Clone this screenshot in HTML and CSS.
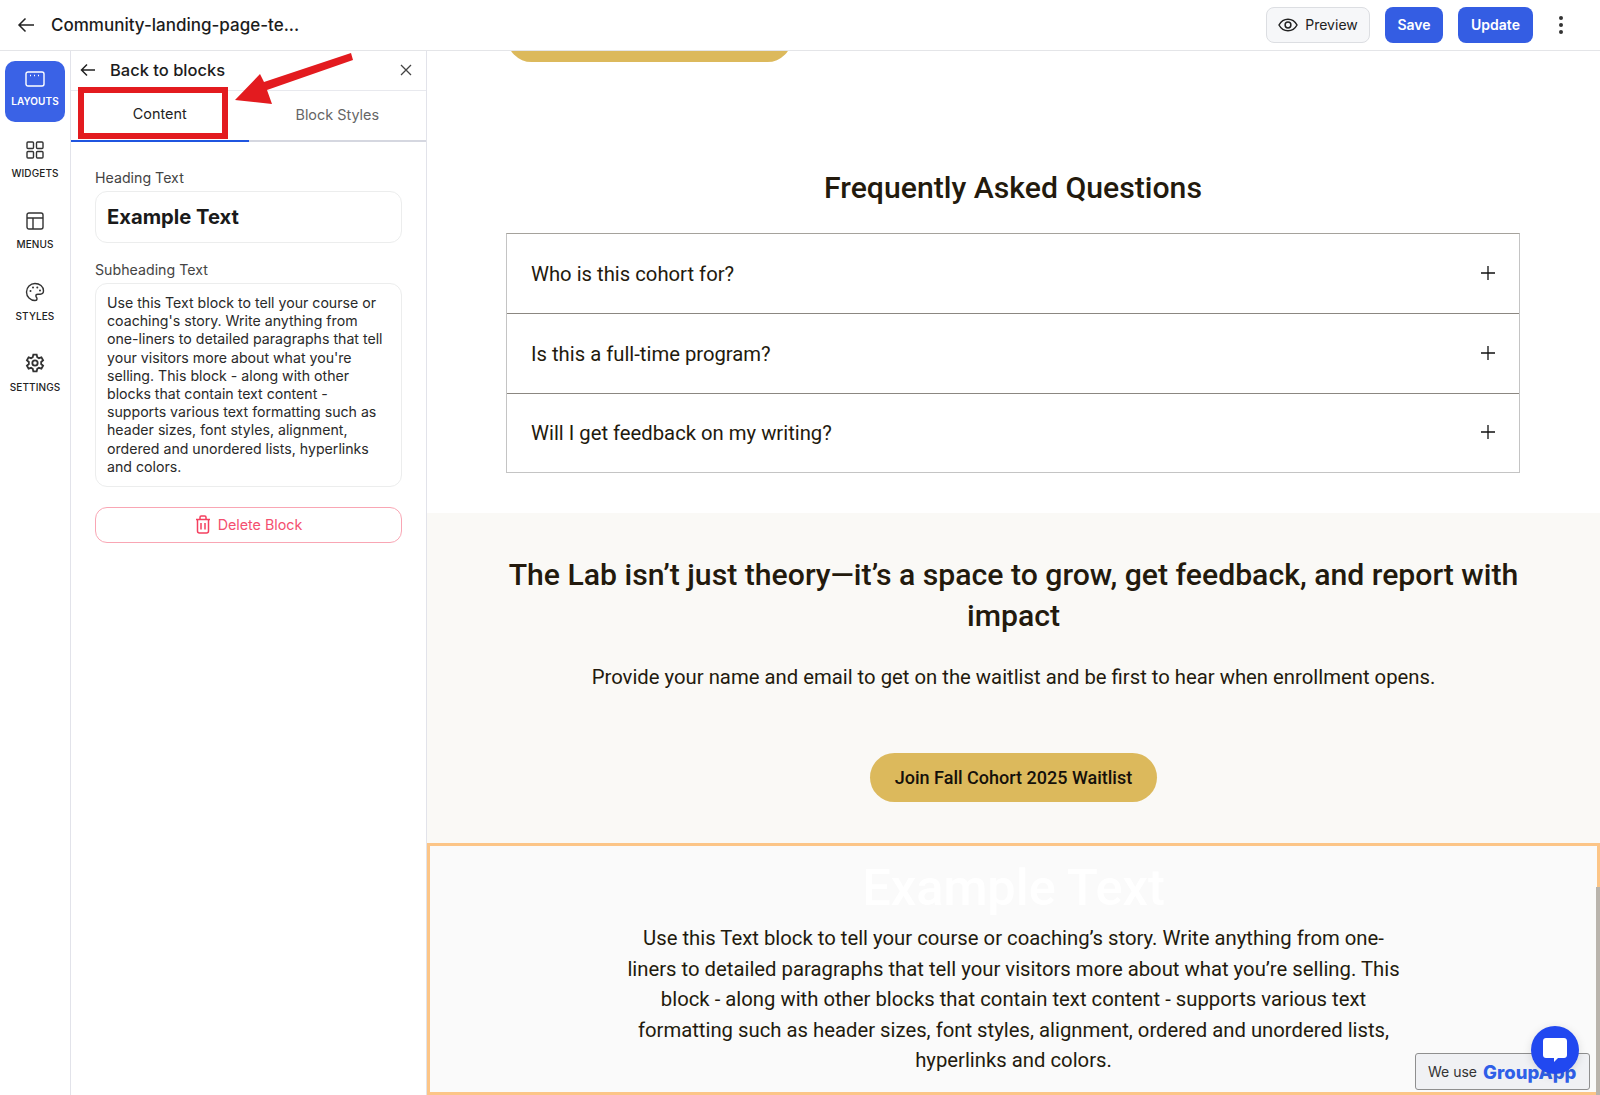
FILE: index.html
```html
<!DOCTYPE html>
<html lang="en">
<head>
    <meta charset="UTF-8">
    <meta name="viewport" content="width=device-width, initial-scale=1.0">
    <title>Community-landing-page-te...</title>
    <link rel="stylesheet" href="styles.css">
</head>
<body>
    <header class="topbar">
        <svg class="back-icon" width="18" height="18" viewBox="0 0 18 18"><path d="M17 9H2M8.500 2.500 2 9l6.500 6.500"/></svg>
        <div class="page-title">Community-landing-page-te...</div>
        <button class="btn-preview">
            <svg width="20" height="14" viewBox="0 0 20 14"><path d="M1 7c2-3.700 5-5.800 9-5.800S17 3.300 19 7c-2 3.700-5 5.800-9 5.800S3 10.700 1 7z"/><circle cx="10" cy="7" r="2.900"/></svg>
            Preview
        </button>
        <button class="btn-blue btn-save">Save</button>
        <button class="btn-blue btn-update">Update</button>
        <div class="more-dots"><span></span><span></span><span></span></div>
    </header>

    <div class="main">
        <nav class="rail">
            <a class="rail-item active">
                <svg width="20" height="16" viewBox="0 0 20 16"><rect x="1" y="1" width="18" height="14" rx="2"/><path class="dots" d="M5 4.500h1M9 4.500h1M13 4.500h1"/></svg>
                <span>Layouts</span>
            </a>
            <a class="rail-item">
                <svg width="18" height="18" viewBox="0 0 18 18"><rect x="1" y="1" width="6.500" height="6.500" rx="1"/><rect x="10.500" y="1" width="6.500" height="6.500" rx="1"/><rect x="1" y="10.500" width="6.500" height="6.500" rx="1"/><rect x="10.500" y="10.500" width="6.500" height="6.500" rx="1"/></svg>
                <span>Widgets</span>
            </a>
            <a class="rail-item">
                <svg width="18" height="18" viewBox="0 0 18 18"><rect x="1" y="1" width="16" height="16" rx="2"/><path d="M1 6h16M7 6v11"/></svg>
                <span>Menus</span>
            </a>
            <a class="rail-item">
                <svg width="20" height="20" viewBox="0 0 20 20"><path d="M10 1.500a8.500 8.500 0 0 0 0 17c1.300 0 2-.8 2-1.800 0-1.300-1.100-1.600-1.100-2.800 0-1 .8-1.700 1.900-1.700h2.400c1.900 0 3.300-1.400 3.300-3.400 0-4.300-3.900-7.300-8.500-7.300z"/><circle class="fill" cx="5.500" cy="9" r="1"/><circle class="fill" cx="8" cy="5.500" r="1"/><circle class="fill" cx="12.300" cy="5.500" r="1"/><circle class="fill" cx="15" cy="8.500" r="1"/></svg>
                <span>Styles</span>
            </a>
            <a class="rail-item">
                <svg class="gear" width="20" height="20" viewBox="0 0 24 24"><circle cx="12" cy="12" r="3.200"/><path d="M10 2h4l.7 3.100 2 1.100 3-1 2 3.500-2.300 2.100v2.400l2.300 2.100-2 3.500-3-1-2 1.100L14 22h-4l-.7-3.100-2-1.100-3 1-2-3.500 2.300-2.100v-2.400L2.300 8.700l2-3.500 3 1 2-1.100z"/></svg>
                <span>Settings</span>
            </a>
        </nav>

        <aside class="panel">
            <div class="panel-head">
                <svg class="back-icon" width="16" height="14" viewBox="0 0 16 14"><path d="M15 7H1.500M7 1.500 1.500 7 7 12.500"/></svg>
                <div class="panel-title">Back to blocks</div>
                <svg class="close-icon" width="12" height="12" viewBox="0 0 12 12"><path d="M1 1l10 10M11 1 1 11"/></svg>
            </div>
            <div class="tabs">
                <div class="tab tab-active">Content</div>
                <div class="tab">Block Styles</div>
            </div>
            <div class="panel-body">
                <label class="field-label">Heading Text</label>
                <div class="input-box">Example Text</div>
                <label class="field-label label-sub">Subheading Text</label>
                <div class="textarea-box">Use this Text block to tell your course or coaching's story. Write anything from one-liners to detailed paragraphs that tell your visitors more about what you're selling. This block - along with other blocks that contain text content - supports various text formatting such as header sizes, font styles, alignment, ordered and unordered lists, hyperlinks and colors.</div>
                <button class="btn-delete">
                    <svg width="16" height="19" viewBox="0 0 16 19"><path d="M1 4.500h14M5 4.500V2.200C5 1.500 5.500 1 6.200 1h3.600c.7 0 1.200.5 1.200 1.200v2.300M2.500 4.500V16c0 1.200.8 2 2 2h7c1.200 0 2-.8 2-2V4.500M6 8v6.500M10 8v6.500"/></svg>
                    Delete Block
                </button>
            </div>
        </aside>

        <main class="canvas">
            <div class="cta-stub"></div>

            <section class="faq">
                <h2 class="faq-title">Frequently Asked Questions</h2>
                <div class="faq-list">
                    <div class="faq-row">
                        <span>Who is this cohort for?</span>
                        <svg width="14" height="14" viewBox="0 0 14 14"><path d="M7 0v14M0 7h14"/></svg>
                    </div>
                    <div class="faq-row">
                        <span>Is this a full-time program?</span>
                        <svg width="14" height="14" viewBox="0 0 14 14"><path d="M7 0v14M0 7h14"/></svg>
                    </div>
                    <div class="faq-row">
                        <span>Will I get feedback on my writing?</span>
                        <svg width="14" height="14" viewBox="0 0 14 14"><path d="M7 0v14M0 7h14"/></svg>
                    </div>
                </div>
            </section>

            <section class="waitlist">
                <h2 class="waitlist-title">The Lab isn’t just theory—it’s a space to grow, get feedback, and report with impact</h2>
                <p class="waitlist-text">Provide your name and email to get on the waitlist and be first to hear when enrollment opens.</p>
                <a class="cta">Join Fall Cohort 2025 Waitlist</a>
            </section>

            <section class="text-block">
                <h2 class="text-block-title">Example Text</h2>
                <p class="text-block-body">Use this Text block to tell your course or coaching’s story. Write anything from one-liners to detailed paragraphs that tell your visitors more about what you’re selling. This block - along with other blocks that contain text content - supports various text formatting such as header sizes, font styles, alignment, ordered and unordered lists, hyperlinks and colors.</p>
            </section>
        </main>
    </div>

    <!-- annotation drawn over the screenshot -->
    <div class="note-box"></div>
    <svg class="note-arrow" width="120" height="56" viewBox="0 0 120 56"><path d="M116 3 118 10 32 40 37 54 0 50 25 24 29 32Z"/></svg>

    <div class="scroll-thumb"></div>
    <div class="brand-badge">We use <b>GroupApp</b></div>
    <div class="chat-bubble">
        <svg width="26" height="26" viewBox="0 0 26 26"><path d="M4 1h18c1.700 0 3 1.300 3 3v14c0 1.700-1.300 3-3 3h-6l-4 4v-4H4c-1.700 0-3-1.300-3-3V4c0-1.700 1.300-3 3-3z"/></svg>
    </div>
</body>
</html>
```

FILE: styles.css
```css
* {
    box-sizing: border-box;
}
body {
    font-family: Inter, "Noto Sans", sans-serif;
    margin: 0;
    height: 1095px;
    overflow: hidden;
    color: #1a1a1a;
    background-color: #fff;
}
button {
    font-family: inherit;
    cursor: pointer;
}

/* top bar */
.topbar {
    height: 51px;
    display: flex;
    align-items: center;
    padding: 0 37px 1px 17px;
    border-bottom: 1px solid #e4e5e8;
}
.back-icon {
    fill: none;
    stroke: #222;
    stroke-width: 1.5;
}
.page-title {
    margin-left: 16px;
    font-size: 17px;
    font-weight: 500;
    color: #1c1c1c;
    flex: 1;
}
.btn-preview {
    height: 36px;
    width: 104px;
    display: flex;
    align-items: center;
    justify-content: center;
    gap: 7px;
    font-size: 14px;
    font-weight: 400;
    color: #222;
    background-color: #f6f7f9;
    border: 1px solid #dcdee2;
    border-radius: 8px;
}
.btn-preview svg {
    fill: none;
    stroke: #222;
    stroke-width: 1.500;
}
.btn-blue {
    height: 36px;
    font-size: 14px;
    font-weight: 600;
    color: #fff;
    background-color: #345de3;
    border: none;
    border-radius: 8px;
}
.btn-save {
    width: 58px;
    margin-left: 15px;
}
.btn-update {
    width: 75px;
    margin-left: 15px;
}
.more-dots {
    margin-left: 26px;
    width: 4px;
    display: flex;
    flex-direction: column;
    gap: 3px;
}
.more-dots span {
    width: 4px;
    height: 4px;
    border-radius: 50%;
    background-color: #333;
}

.main {
    display: flex;
    height: 1044px;
}

/* icon rail */
.rail {
    width: 71px;
    flex: none;
    border-right: 1px solid #e2e3ea;
    padding: 10px 5px 0;
    display: flex;
    flex-direction: column;
    gap: 10px;
}
.rail-item {
    height: 61px;
    display: flex;
    flex-direction: column;
    align-items: center;
    justify-content: center;
    gap: 8px;
    padding-bottom: 5px;
    border-radius: 10px;
    font-size: 10px;
    font-weight: 500;
    letter-spacing: .1px;
    text-transform: uppercase;
    color: #222;
}
.rail-item svg {
    fill: none;
    stroke: #333;
    stroke-width: 1.400;
}
.rail-item .fill {
    fill: #333;
    stroke: none;
}
.rail-item .gear {
    stroke-width: 2.200;
}
.rail-item.active {
    background-color: #3a62e6;
    color: #fff;
    font-weight: 600;
}
.rail-item.active svg {
    stroke: #fff;
}

/* block panel */
.panel {
    width: 356px;
    flex: none;
    border-right: 1px solid #e2e3ea;
}
.panel-head {
    height: 40px;
    display: flex;
    align-items: center;
    padding: 0 14px 1px 9px;
    border-bottom: 1px solid #e8e9ee;
}
.panel-title {
    flex: 1;
    margin-left: 14px;
    font-size: 16.500px;
    font-weight: 500;
    color: #1c1c1c;
}
.close-icon {
    fill: none;
    stroke: #444;
    stroke-width: 1.300;
}
.tabs {
    display: flex;
    height: 51px;
    border-bottom: 2px solid #d5d7e0;
}
.tab {
    width: 178px;
    height: 51px;
    padding-bottom: 4px;
    display: flex;
    align-items: center;
    justify-content: center;
    font-size: 14.400px;
    color: #666;
}
.tab-active {
    color: #222;
    border-bottom: 2px solid #1f55e0;
}
.panel-body {
    padding: 27px 24px 0;
}
.field-label {
    display: block;
    font-size: 14.200px;
    line-height: 17px;
    color: #444;
}
.label-sub {
    margin-top: 18px;
}
.input-box {
    margin-top: 5px;
    height: 52px;
    padding: 0 11px 2px;
    display: flex;
    align-items: center;
    font-size: 20.200px;
    font-weight: 700;
    color: #1a1a1a;
    border: 1px solid #eceded;
    border-radius: 12px;
}
.textarea-box {
    margin-top: 5px;
    height: 204px;
    padding: 10px 11px;
    font-size: 14.150px;
    line-height: 18.200px;
    color: #2a2a2a;
    border: 1px solid #eceded;
    border-radius: 12px;
}
.btn-delete {
    margin-top: 20px;
    width: 100%;
    height: 36px;
    padding-bottom: 2px;
    display: flex;
    align-items: center;
    justify-content: center;
    gap: 7px;
    font-size: 14.300px;
    color: #f4506f;
    background-color: #fff;
    border: 1px solid #f9a6b4;
    border-radius: 12px;
}
.btn-delete svg {
    fill: none;
    stroke: #f4405f;
    stroke-width: 1.500;
}

/* page preview */
.canvas {
    flex: 1;
    overflow: hidden;
    font-family: Roboto, sans-serif;
    color: #231a0d;
}
.cta-stub {
    width: 285px;
    height: 49px;
    margin: -38px 0 0 80px;
    background-color: #dcb95c;
    border-radius: 25px;
}
.faq {
    height: 451px;
    padding: 0 80px 0 79px;
}
.faq-title {
    margin: 0;
    padding-top: 106px;
    height: 171px;
    font-size: 30.200px;
    line-height: 40px;
    font-weight: 500;
    text-align: center;
}
.faq-list {
    border: 1px solid #c4c4c4;
    border-top-color: #a5a29c;
}
.faq-row {
    height: 80px;
    display: flex;
    align-items: center;
    justify-content: space-between;
    padding: 0 24px;
    font-size: 20.250px;
    border-bottom: 1px solid #8b8781;
}
.faq-row:last-child {
    height: 78px;
    border-bottom: none;
}
.faq-row svg {
    fill: none;
    stroke: #111;
    stroke-width: 1.300;
    margin-bottom: 2px;
}
.waitlist {
    height: 330px;
    padding: 41px 70px 0;
    text-align: center;
    background-color: #faf9f6;
}
.waitlist-title {
    margin: 0;
    font-size: 30.200px;
    line-height: 41px;
    font-weight: 500;
}
.waitlist-text {
    margin: 26px 0 0;
    font-size: 20.300px;
    line-height: 30px;
}
.cta {
    display: inline-block;
    margin-top: 61px;
    padding: 0 24.500px;
    height: 49px;
    line-height: 49px;
    font-size: 18px;
    font-weight: 500;
    color: #15100a;
    background-color: #dcb95c;
    border-radius: 25px;
}
.text-block {
    height: 252px;
    padding-top: 12px;
    text-align: center;
    background-color: #fafafa;
    border: 3px solid #fcc587;
}
.text-block-title {
    margin: 0;
    font-size: 50.500px;
    line-height: 60px;
    font-weight: 500;
    color: #fff;
}
.text-block-body {
    width: 785px;
    margin: 5px auto 0;
    font-size: 20.300px;
    line-height: 30.500px;
}

/* overlays */
.note-box {
    position: absolute;
    left: 78px;
    top: 87px;
    width: 150px;
    height: 52px;
    border: 6px solid #e31b1f;
}
.note-arrow {
    position: absolute;
    left: 235px;
    top: 50px;
    fill: #e31b1f;
}
.scroll-thumb {
    position: absolute;
    right: 0;
    top: 887px;
    bottom: 0;
    width: 4px;
    background-color: #b9b4ac;
}
.brand-badge {
    position: absolute;
    left: 1415px;
    top: 1053px;
    width: 175px;
    height: 37px;
    padding-left: 12px;
    display: flex;
    align-items: center;
    gap: 6px;
    font-size: 14px;
    color: #333;
    background-color: #f0f1f4;
    border: 1px solid #8f8f8f;
    border-radius: 3px;
}
.brand-badge b {
    font-size: 18.500px;
    font-weight: 800;
    color: #2f5fe8;
}
.chat-bubble {
    position: absolute;
    left: 1531px;
    top: 1026px;
    width: 48px;
    height: 48px;
    display: flex;
    align-items: center;
    justify-content: center;
    border-radius: 50%;
    background-color: #2148f0;
    box-shadow: 0 2px 10px rgba(0, 0, 0, .12);
}
.chat-bubble svg {
    fill: #fff;
}
```
